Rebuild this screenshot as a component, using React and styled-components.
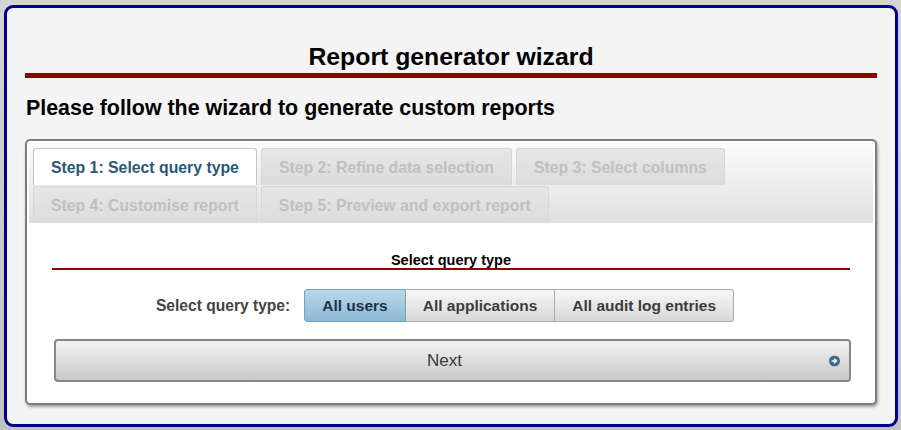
import React from "react";
import styled, { createGlobalStyle } from "styled-components";

const GlobalStyle = createGlobalStyle`
  html, body {
    margin: 0;
    padding: 0;
    background: #c6c6c6;
    font-family: "Liberation Sans", Arial, sans-serif;
  }
  * { box-sizing: border-box; }
`;

const Page = styled.div`
  width: 901px;
  height: 430px;
  padding: 5px 3px 3px 4px;
  background: linear-gradient(#d4d4d4, #c2c2c2);
`;

const Panel = styled.div`
  width: 894px;
  height: 422px;
  border: 3px solid #00008f;
  border-radius: 9px;
  background: #f4f4f4;
  padding: 0 18px;
  display: flex;
  flex-direction: column;
`;

const Title = styled.h1`
  margin: 36px 0 0;
  padding-bottom: 3px;
  border-bottom: 5px solid #8f0000;
  font-size: 24.8px;
  line-height: 26px;
  font-weight: bold;
  text-align: center;
  color: #000;
`;

const Subtitle = styled.h2`
  margin: 18px 0 0 1px;
  font-size: 21.4px;
  line-height: 24px;
  font-weight: bold;
  color: #000;
`;

const Card = styled.div`
  margin-top: 19px;
  border: 2px solid #7d7d7d;
  border-radius: 5px;
  background: #fff;
  padding: 2px;
  box-shadow: 1px 2px 3px rgba(0, 0, 0, 0.35);
`;

const TabBar = styled.div`
  display: flex;
  flex-wrap: wrap;
  column-gap: 4px;
  row-gap: 1px;
  padding: 5px 4px 0;
  background: linear-gradient(#fbfbfb, #e0e0e0);
`;

const Tab = styled.div`
  height: 37px;
  padding: 1px 17px 0;
  display: flex;
  align-items: center;
  border: 1px solid ${(p) => (p.$active ? "#c4c4c4" : "#d6d6d6")};
  border-bottom: none;
  border-radius: 3px 3px 0 0;
  background: ${(p) => (p.$active ? "#fff" : "linear-gradient(#e6e6e6, #dcdcdc)")};
  color: ${(p) => (p.$active ? "#2b5875" : "#c0c0c0")};
  font-size: 15.8px;
  font-weight: bold;
  white-space: nowrap;
`;

const Content = styled.div`
  padding: 29px 23px 19px;
  background: #fff;
  display: flex;
  flex-direction: column;
`;

const SectionHeading = styled.div`
  font-size: 14.5px;
  line-height: 16px;
  font-weight: bold;
  text-align: center;
  color: #000;
  border-bottom: 2px solid #8f0000;
`;

const QueryRow = styled.div`
  margin-top: 19px;
  display: flex;
  justify-content: center;
  align-items: center;
  gap: 14px;
  padding-right: 12px;
`;

const Label = styled.span`
  font-size: 15.6px;
  font-weight: bold;
  color: #444;
`;

const ButtonGroup = styled.div`
  display: flex;
`;

const ChoiceButton = styled.button`
  height: 33px;
  padding: 0 17px;
  margin: 0;
  font-family: inherit;
  font-size: 15.5px;
  font-weight: bold;
  border: 1px solid ${(p) => (p.$active ? "#7d9fb6" : "#ababab")};
  border-left-width: ${(p) => (p.$first ? "1px" : "0")};
  border-radius: ${(p) => (p.$first ? "3px 0 0 3px" : p.$last ? "0 3px 3px 0" : "0")};
  background: ${(p) =>
    p.$active
      ? "linear-gradient(#b9d8eb, #8cb9d5)"
      : "linear-gradient(#f7f7f7, #d8d8d8)"};
  color: ${(p) => (p.$active ? "#1d3446" : "#3c3c3c")};
  cursor: pointer;
`;

const NextButton = styled.button`
  position: relative;
  margin: 17px -1px 0 2px;
  height: 43px;
  padding: 0 16px 0 0;
  border: 2px solid #868686;
  border-radius: 4px;
  background: linear-gradient(#f2f2f2, #c9c9c9);
  font-family: inherit;
  font-size: 17px;
  font-weight: normal;
  color: #3a3a3a;
  display: flex;
  align-items: center;
  justify-content: center;
  cursor: pointer;
`;

const NextIcon = styled.svg`
  position: absolute;
  right: 9px;
  top: 50%;
  transform: translateY(-50%);
`;

export default function App() {
  const tabs = [
    "Step 1: Select query type",
    "Step 2: Refine data selection",
    "Step 3: Select columns",
    "Step 4: Customise report",
    "Step 5: Preview and export report",
  ];
  const choices = ["All users", "All applications", "All audit log entries"];
  return (
    <>
      <GlobalStyle />
      <Page>
        <Panel>
          <Title>Report generator wizard</Title>
          <Subtitle>Please follow the wizard to generate custom reports</Subtitle>
          <Card>
            <TabBar>
              {tabs.map((t, i) => (
                <Tab key={t} $active={i === 0}>
                  {t}
                </Tab>
              ))}
            </TabBar>
            <Content>
              <SectionHeading>Select query type</SectionHeading>
              <QueryRow>
                <Label>Select query type:</Label>
                <ButtonGroup>
                  {choices.map((c, i) => (
                    <ChoiceButton
                      key={c}
                      $active={i === 0}
                      $first={i === 0}
                      $last={i === choices.length - 1}
                    >
                      {c}
                    </ChoiceButton>
                  ))}
                </ButtonGroup>
              </QueryRow>
              <NextButton>
                Next
                <NextIcon width="11" height="11" viewBox="0 0 11 11">
                  <circle cx="5.5" cy="5.5" r="5.5" fill="#3b6a8a" />
                  <path d="M2.6 5.5h4.6M5.2 3.3l2.2 2.2-2.2 2.2" stroke="#fff" strokeWidth="1.5" fill="none" />
                </NextIcon>
              </NextButton>
            </Content>
          </Card>
        </Panel>
      </Page>
    </>
  );
}
